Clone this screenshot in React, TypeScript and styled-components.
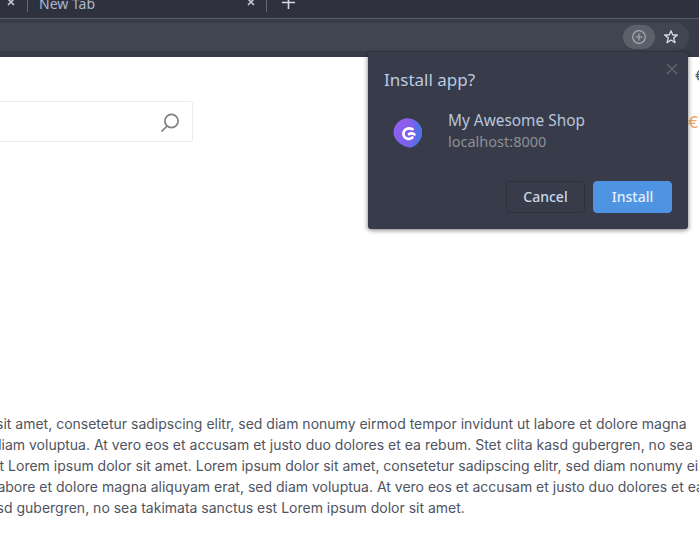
import React from "react";
import styled, { createGlobalStyle } from "styled-components";

const Global = createGlobalStyle`
  html, body { margin: 0; padding: 0; width: 699px; height: 542px; overflow: hidden; background: #fff; }
  #root { width: 699px; height: 542px; overflow: hidden; }
`;
const Page = styled.div`
  position: relative;
  width: 699px;
  height: 542px;
  overflow: hidden;
  background: #fff;
  font-family: Inter, "Liberation Sans", sans-serif;
`;
const TabStrip = styled.div`
  height: 18px;
  display: flex;
  align-items: flex-end;
  background: #2f323e;
  color: #b9c3d3;
  font-family: "Noto Sans", sans-serif;
  overflow: hidden;
`;
const TabClose = styled.svg`
  flex: none;
  margin-bottom: 12px;
`;
const TabDivider = styled.div`
  flex: none;
  width: 1px;
  height: 12px;
  margin-bottom: 6px;
  background: #646875;
`;
const FirstTab = styled.div`
  width: 27px;
  display: flex;
  justify-content: flex-end;
  align-items: flex-end;
  padding-right: 12px;
  box-sizing: border-box;
`;
const Tab = styled.div`
  width: 239px;
  display: flex;
  align-items: flex-end;
  justify-content: space-between;
  padding-left: 11px;
  box-sizing: border-box;
`;
const TabLabel = styled.span`
  font-size: 14px;
  line-height: 20px;
  height: 20px;
  margin-bottom: 4px;
  margin-top: -6px;
  color: #a9b8d0;
`;
const TabRight = styled.div`
  display: flex;
  align-items: flex-end;
  gap: 11px;
`;
const NewTab = styled.svg`
  flex: none;
  margin: 0 0 9px 15px;
`;
const Toolbar = styled.div`
  height: 39px;
  box-sizing: border-box;
  border-top: 1px solid #585c69;
  background: #383b49;
  display: flex;
  padding: 4px 10px 4px 0;
`;
const Omnibox = styled.div`
  flex: 1;
  height: 28px;
  border-radius: 0 14px 14px 0;
  background: #414552;
  display: flex;
  justify-content: flex-end;
  align-items: center;
  padding-right: 2px;
`;
const InstallChip = styled.div`
  width: 32px;
  height: 24px;
  border-radius: 12px;
  background: #5c606b;
  display: flex;
  align-items: center;
  justify-content: center;
`;
const StarSlot = styled.div`
  width: 32px;
  height: 24px;
  display: flex;
  align-items: center;
  justify-content: center;
`;
const Content = styled.div`
  display: flex;
  justify-content: space-between;
  height: 356px;
`;
const Search = styled.div`
  width: 193px;
  height: 41px;
  margin-top: 44px;
  box-sizing: border-box;
  border: 1px solid #ebebeb;
  border-left: none;
  border-radius: 0 3px 3px 0;
  display: flex;
  justify-content: flex-end;
  align-items: center;
  padding-right: 12px;
`;
const Prices = styled.div`
  margin-right: -20px;
  width: 31px;
  display: flex;
  flex-direction: column;
  white-space: nowrap;
`;
const Price = styled.span<{ $accent?: boolean }>`
  font-size: ${(p) => (p.$accent ? "16px" : "14px")};
  line-height: 20px;
  margin-top: ${(p) => (p.$accent ? "26px" : "9px")};
  margin-left: ${(p) => (p.$accent ? "0" : "7px")};
  color: ${(p) => (p.$accent ? "#f2a66b" : "#4a5568")};
`;
const Body = styled.div`
  font-size: 14px;
  line-height: 21px;
  color: #4f5461;
  white-space: nowrap;
`;
const Line = styled.div<{ $shift: number }>`
  margin-left: ${(p) => p.$shift}px;
`;
const Popup = styled.div`
  position: absolute;
  left: 368px;
  top: 52px;
  width: 320px;
  height: 177px;
  box-sizing: border-box;
  padding: 17px 16px 16px;
  background: #383b49;
  border-radius: 3px;
  box-shadow: 0 1px 5px rgba(0, 0, 0, 0.55);
  color: #b6c6dc;
  font-family: "Noto Sans", sans-serif;
  display: flex;
  flex-direction: column;
`;
const Close = styled.svg`
  position: absolute;
  top: 11px;
  right: 10px;
`;
const Title = styled.div`
  font-size: 17px;
  line-height: 22px;
  color: #b9cbe2;
`;
const AppRow = styled.div`
  display: flex;
  align-items: flex-start;
  margin-top: 19px;
`;
const AppIcon = styled.svg`
  flex: none;
  margin: 7px 24px 0 8px;
`;
const AppText = styled.div`
  display: flex;
  flex-direction: column;
`;
const AppName = styled.div`
  font-size: 15.4px;
  line-height: 21px;
  color: #b6c6dc;
`;
const AppHost = styled.div`
  font-size: 14.5px;
  line-height: 20px;
  color: #8d9097;
`;
const Actions = styled.div`
  margin-top: auto;
  display: flex;
  justify-content: flex-end;
  gap: 8px;
`;
const Button = styled.button<{ $primary?: boolean }>`
  width: 79px;
  height: 32px;
  box-sizing: border-box;
  border-radius: 4px;
  border: 1px solid ${(p) => (p.$primary ? "#4f94e2" : "#2e303c")};
  background: ${(p) => (p.$primary ? "#4f94e2" : "transparent")};
  color: ${(p) => (p.$primary ? "#e4effb" : "#cbd8ea")};
  font-family: "Noto Sans", sans-serif;
  font-size: 14px;
  font-weight: 500;
  padding: 0 0 2px;
`;

const X = ({ s, c }: { s: number; c: string }) => (
  <path d={`M1 1L${s - 1} ${s - 1}M${s - 1} 1L1 ${s - 1}`} stroke={c} strokeWidth="1.6" fill="none" />
);

export default function App() {
  return (
    <Page>
      <Global />
      <TabStrip>
        <FirstTab>
          <TabClose width="8" height="8" viewBox="0 0 8 8"><X s={8} c="#c5cad3" /></TabClose>
        </FirstTab>
        <TabDivider />
        <Tab>
          <TabLabel>New Tab</TabLabel>
          <TabRight>
            <TabClose width="8" height="8" viewBox="0 0 8 8"><X s={8} c="#c5cad3" /></TabClose>
            <TabDivider />
          </TabRight>
        </Tab>
        <NewTab width="13" height="13" viewBox="0 0 13 13">
          <path d="M6.5 0V13M0 6.5H13" stroke="#d5d9e0" strokeWidth="1.6" />
        </NewTab>
      </TabStrip>
      <Toolbar>
        <Omnibox>
          <InstallChip>
            <svg width="16" height="16" viewBox="0 0 16 16" fill="none" stroke="#a6a9b1" strokeWidth="1.2">
              <circle cx="8" cy="8" r="6.3" />
              <path d="M8 4.6V11.4M4.6 8H11.4" />
            </svg>
          </InstallChip>
          <StarSlot>
            <svg width="16" height="16" viewBox="0 0 16 16" fill="none" stroke="#d3d6dc" strokeWidth="1.4" strokeLinejoin="round">
              <path d="M8 1.8L9.8 6H14.4L10.7 8.9L12 13.6L8 11L4 13.6L5.3 8.9L1.6 6H6.2Z" />
            </svg>
          </StarSlot>
        </Omnibox>
      </Toolbar>
      <Content>
        <Search>
          <svg width="20" height="20" viewBox="0 0 20 20" fill="none" stroke="#808080" strokeWidth="1.7">
            <circle cx="11.5" cy="9" r="6.6" />
            <path d="M7 14L1.5 19.5" />
          </svg>
        </Search>
        <Prices>
          <Price>€0.00</Price>
          <Price $accent>€0.00</Price>
        </Prices>
      </Content>
      <Body>
        <Line $shift={-4}>sit amet, consetetur sadipscing elitr, sed diam nonumy eirmod tempor invidunt ut labore et dolore magna</Line>
        <Line $shift={-7}>diam voluptua. At vero eos et accusam et justo duo dolores et ea rebum. Stet clita kasd gubergren, no sea</Line>
        <Line $shift={-16}>est Lorem ipsum dolor sit amet. Lorem ipsum dolor sit amet, consetetur sadipscing elitr, sed diam nonumy eirmod</Line>
        <Line $shift={-6}>labore et dolore magna aliquyam erat, sed diam voluptua. At vero eos et accusam et justo duo dolores et ea rebum</Line>
        <Line $shift={-19}>kasd gubergren, no sea takimata sanctus est Lorem ipsum dolor sit amet.</Line>
      </Body>
      <Popup>
        <Close width="12" height="12" viewBox="0 0 12 12"><X s={12} c="#5f626d" /></Close>
        <Title>Install app?</Title>
        <AppRow>
          <AppIcon width="32" height="32" viewBox="0 0 32 32">
            <defs>
              <linearGradient id="logoGrad" x1="0" y1="0" x2="1" y2="1">
                <stop offset="0" stopColor="#9a5cf0" />
                <stop offset="1" stopColor="#6a66ea" />
              </linearGradient>
            </defs>
            <path d="M13 1.5C20 0.5 29 5 30 14C31 22 24 30 18 30.5C11 30 2 24 1.5 16C1.5 9 6 3 13 1.5Z" fill="url(#logoGrad)" />
            <path d="M20 2.8C26 5 29.5 9 30 14C31 22 24 30 18 30.5C25 24 26 12 20 2.8Z" fill="#5470e6" />
            <path d="M20.5 12.2C16 10 11.2 12.5 11.4 17C11.6 21.5 17 23.5 20.5 20.5M17 17.2C18.5 16.2 20.5 16.2 22.5 17.5" fill="none" stroke="#fff" strokeWidth="2.6" strokeLinecap="round" />
          </AppIcon>
          <AppText>
            <AppName>My Awesome Shop</AppName>
            <AppHost>localhost:8000</AppHost>
          </AppText>
        </AppRow>
        <Actions>
          <Button>Cancel</Button>
          <Button $primary>Install</Button>
        </Actions>
      </Popup>
    </Page>
  );
}
